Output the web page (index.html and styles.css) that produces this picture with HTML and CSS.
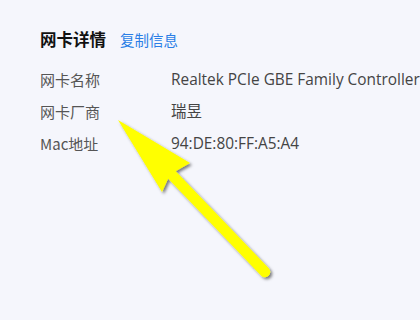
FILE: index.html
```html
<!DOCTYPE html>
<html lang="zh-CN">
<head>
<meta charset="utf-8">
<link rel="stylesheet" href="styles.css">
</head>
<body>
<div class="panel">
  <div class="head">
    <span class="title">网卡详情</span>
    <span class="copy">复制信息</span>
  </div>
  <div class="rows">
    <div class="label">网卡名称</div><div class="value">Realtek PCIe GBE Family Controller</div>
    <div class="label">网卡厂商</div><div class="value">瑞昱</div>
    <div class="label">Mac地址</div><div class="value">94:DE:80:FF:A5:A4</div>
  </div>
</div>
<svg class="arrow" width="420" height="320" viewBox="0 0 420 320">
  <defs>
    <filter id="sh" x="-20%" y="-20%" width="140%" height="140%">
      <feDropShadow dx="2" dy="2" stdDeviation="1.6" flood-color="#000" flood-opacity="0.5"/>
    </filter>
  </defs>
  <g filter="url(#sh)" fill="#ffff00">
    <line x1="172" y1="175" x2="265" y2="272" stroke="#ffff00" stroke-width="10.5" stroke-linecap="round"/>
    <polygon points="118,120 190,163 176,171 168,179 162,192"/>
  </g>
</svg>
</body>
</html>
```
FILE: styles.css
```css
html, body {
  margin: 0;
  padding: 0;
}
body {
  width: 420px;
  height: 320px;
  overflow: hidden;
  background: #f5f6fc;
  font-family: "Open Sans", "Noto Sans CJK SC", sans-serif;
  position: relative;
}
.panel {
  padding: 27px 0 0 40px;
}
.head {
  display: flex;
  align-items: baseline;
  gap: 14px;
  height: 22px;
}
.title {
  font-family: "Noto Sans CJK SC", sans-serif;
  font-size: 16.5px;
  font-weight: 700;
  color: #111;
}
.copy {
  font-family: "Noto Sans CJK SC", sans-serif;
  font-size: 14.5px;
  color: #2a7ee6;
}
.rows {
  margin-top: 20px;
  display: grid;
  grid-template-columns: 131px auto;
  grid-auto-rows: 32px;
  white-space: nowrap;
  font-size: 15.4px;
  line-height: 22px;
  color: #4a4a4a;
}
.label {
  font-family: "Noto Sans CJK SC", "Open Sans", sans-serif;
  font-size: 15px;
  color: #555;
}
.value {
  font-family: "Open Sans", "Noto Sans CJK SC", sans-serif;
  color: #444;
}
.arrow {
  position: absolute;
  left: 0;
  top: 0;
}
```
